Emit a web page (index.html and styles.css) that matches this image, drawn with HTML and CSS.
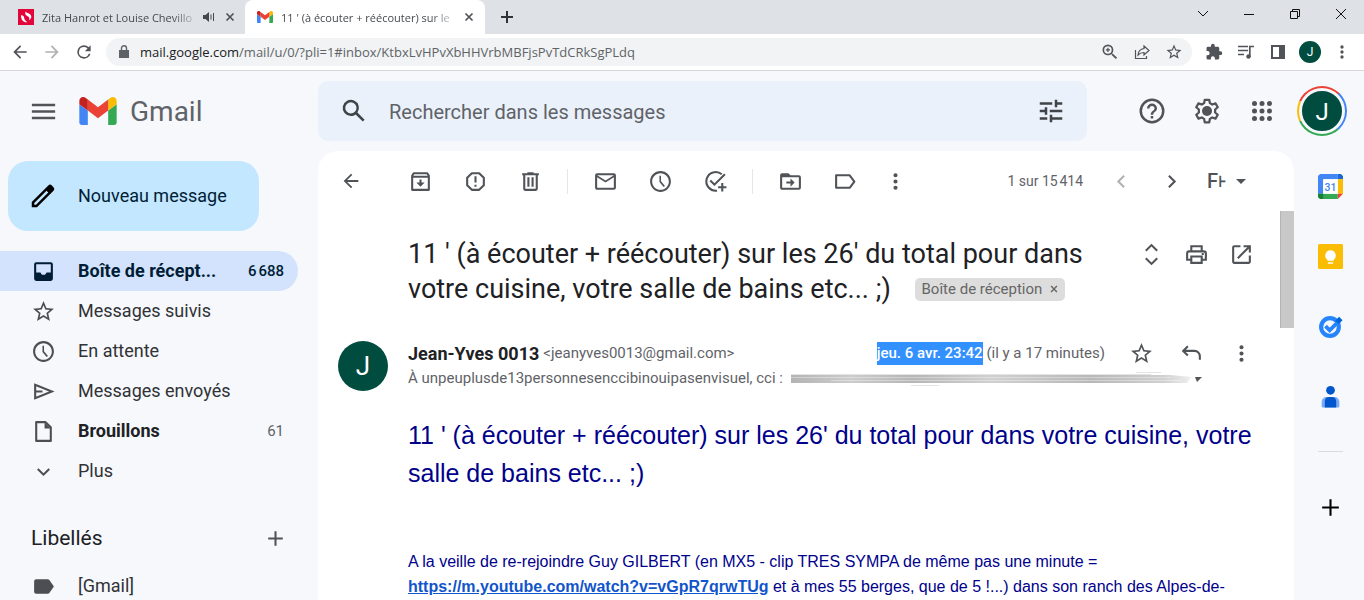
FILE: index.html
```html
<!DOCTYPE html>
<html lang="fr">
<head>
<meta charset="utf-8">
<title>Gmail</title>
<link rel="stylesheet" href="styles.css">
</head>
<body>
<svg class="sprite" aria-hidden="true">
  <symbol id="close" viewBox="0 0 24 24"><path d="M5 5l14 14M19 5L5 19" fill="none" stroke="currentColor" stroke-width="3.4"/></symbol>
  <symbol id="dots" viewBox="0 0 24 24"><path d="M12 8a2 2 0 1 0 0-4 2 2 0 0 0 0 4zm0 2a2 2 0 1 0 0 4 2 2 0 0 0 0-4zm0 6a2 2 0 1 0 0 4 2 2 0 0 0 0-4z"/></symbol>
  <symbol id="star" viewBox="0 0 24 24"><path d="M22 9.24l-7.19-.62L12 2 9.19 8.63 2 9.24l5.46 4.73L5.82 21 12 17.27 18.18 21l-1.63-7.03L22 9.24zM12 15.4l-3.76 2.27 1-4.28-3.32-2.88 4.38-.38L12 6.1l1.71 4.04 4.38.38-3.32 2.88 1 4.28L12 15.4z"/></symbol>
  <symbol id="clock" viewBox="0 0 24 24"><path d="M11.99 2C6.47 2 2 6.48 2 12s4.47 10 9.99 10C17.52 22 22 17.52 22 12S17.52 2 11.99 2zM12 20c-4.42 0-8-3.58-8-8s3.58-8 8-8 8 3.58 8 8-3.580 8-8 8zM12.500 6.500H11v6l4 4.800 1.300-1-3.800-4.500z"/></symbol>
  <symbol id="back" viewBox="0 0 24 24"><path d="M20 11H7.830l5.590-5.590L12 4l-8 8 8 8 1.410-1.410L7.830 13H20z"/></symbol>
  <symbol id="gmail" viewBox="52 42 88 66"><path fill="#4285f4" d="M58 108h14V74L52 59v43c0 3.320 2.690 6 6 6"/><path fill="#34a853" d="M120 108h14c3.320 0 6-2.690 6-6V59l-20 15"/><path fill="#fbbc04" d="M120 48v26l20-15v-8c0-7.420-8.470-11.650-14.400-7.200"/><path fill="#ea4335" d="M72 74V48l24 18 24-18v26L96 92"/><path fill="#c5221f" d="M52 51v8l20 15V48l-5.600-4.200c-5.940-4.450-14.400-.22-14.400 7.200"/></symbol>
</svg>

<div class="tabs">
  <div class="tab">
    <svg class="favicon" viewBox="0 0 16 16"><path fill="#e2053a" d="M0 0h16v16H0z"/><path fill="#fff" d="M7.500 2.500C6.800 5 7.500 6.300 9.200 7c2 .8 2.600 1.800 1.800 4.200 2.800-1.400 3-4.700.8-6.200-1.300-.9-3-1-4.300-2.500zM3 6.500c1.500-.5 3 .5 3.200 2.500.2 1.700 1.300 2.800 3.300 4.200-3.500.6-6.700-2-6.500-6.700z"/></svg>
    <span class="tab-title">Zita Hanrot et Louise Chevillo</span>
    <svg class="speaker" viewBox="0 0 14 12"><path d="M1 4h2.500L7 1v10L3.500 8H1z"/><path d="M9 3.500v5M11.500 2v8" stroke="currentColor" fill="none"/></svg>
    <button class="tab-close" aria-label="Fermer"><svg viewBox="0 0 24 24"><use href="#close"/></svg></button>
  </div>
  <div class="tab active">
    <svg class="favicon"><use href="#gmail"/></svg>
    <span class="tab-title">11 ' (à écouter + réécouter) sur le</span>
    <button class="tab-close" aria-label="Fermer"><svg viewBox="0 0 24 24"><use href="#close"/></svg></button>
  </div>
  <button class="new-tab" aria-label="Nouvel onglet"><svg viewBox="0 0 12 12"><path d="M6 0v12M0 6h12" stroke="currentColor" stroke-width="2"/></svg></button>
  <div class="window-controls">
    <button aria-label="Onglets"><svg viewBox="0 0 12 12"><path d="M1 3l5 5 5-5"/></svg></button>
    <button aria-label="Réduire"><svg viewBox="0 0 12 12"><path d="M1 6.500h10"/></svg></button>
    <button aria-label="Restaurer"><svg viewBox="0 0 12 12"><path d="M1.500 3.500h7v7h-7zM3.500 3.500v-2h7v7h-2"/></svg></button>
    <button aria-label="Fermer la fenêtre"><svg viewBox="0 0 12 12"><path d="M1 1l10 10M11 1L1 11"/></svg></button>
  </div>
</div>

<div class="browser-bar">
  <button aria-label="Retour"><svg class="i20"><use href="#back"/></svg></button>
  <button class="faded" aria-label="Avancer"><svg class="i20" viewBox="0 0 24 24"><path d="M4 11h12.170l-5.590-5.590L12 4l8 8-8 8-1.410-1.410L16.170 13H4z"/></svg></button>
  <button aria-label="Actualiser"><svg class="i20" viewBox="0 0 24 24"><path d="M17.650 6.350A7.960 7.960 0 0 0 12 4a8 8 0 1 0 7.730 10h-2.080A6 6 0 1 1 12 6c1.660 0 3.140.69 4.220 1.780L13 11h7V4z"/></svg></button>
  <div class="omnibox">
    <svg class="lock" viewBox="0 0 10 14"><path d="M0 5h10v8H0z"/><path d="M2.500 5.500V3.300a2.500 2.500 0 0 1 5 0v2.200" fill="none" stroke="currentColor" stroke-width="1.400"/></svg>
    <span class="url"><b>mail.google.com</b>/mail/u/0/?pli=1#inbox/KtbxLvHPvXbHHVrbMBFjsPvTdCRkSgPLdq</span>
    <button aria-label="Zoom"><svg class="i20" viewBox="0 0 24 24"><path d="M15.500 14h-.79l-.28-.27A6.470 6.470 0 0 0 16 9.500 6.500 6.500 0 1 0 9.500 16c1.610 0 3.090-.59 4.230-1.570l.27.28v.79l5 4.990L20.490 19zm-6 0a4.500 4.500 0 1 1 0-9 4.500 4.500 0 0 1 0 9zm.75-7h-1.500v1.750H7v1.500h1.750V12h1.500v-1.750H12v-1.500h-1.750z"/></svg></button>
    <button aria-label="Partager"><svg class="i18" viewBox="0 0 18 18"><path d="M2.500 7v8.500h11V13M11 3l5 4.500-5 4.500V9.500c-3 0-4.500.8-6 2.500.3-3.500 2.500-6 6-6.500z" fill="none" stroke="currentColor" stroke-width="1.200"/></svg></button>
    <button aria-label="Favori"><svg class="i18"><use href="#star"/></svg></button>
  </div>
  <button aria-label="Extensions"><svg class="i18" viewBox="0 0 24 24"><path d="M20.500 11H19V7c0-1.100-.9-2-2-2h-4V3.500a2.500 2.500 0 0 0-5 0V5H4c-1.100 0-2 .9-2 2v3.800h1.500a2.700 2.700 0 0 1 0 5.400H2V20c0 1.100.9 2 2 2h3.800v-1.500a2.700 2.700 0 0 1 5.400 0V22H17c1.100 0 2-.9 2-2v-4h1.500a2.500 2.500 0 0 0 0-5z"/></svg></button>
  <button aria-label="Médias"><svg class="i18" viewBox="0 0 18 18"><path d="M1 3.500h10M1 7.500h10M1 11.500h6M12.800 14V3.500H17" fill="none" stroke="currentColor" stroke-width="1.700"/><circle cx="11.500" cy="13.500" r="2.200"/></svg></button>
  <button aria-label="Panneau latéral"><svg class="i18" viewBox="0 0 18 18"><path d="M2 2h14v14H2zm2 2v10h6V4z" fill-rule="evenodd"/></svg></button>
  <button aria-label="Profil"><span class="profile">J</span></button>
  <button aria-label="Menu"><svg class="i20"><use href="#dots"/></svg></button>
</div>

<div class="app">
  <header class="header">
    <div class="brand">
      <button aria-label="Menu principal"><svg class="i31" viewBox="0 0 24 24"><path d="M3 18h18v-2H3zm0-5h18v-2H3zm0-7v2h18V6z"/></svg></button>
      <svg class="logo"><use href="#gmail"/></svg>
      <span class="brand-name">Gmail</span>
    </div>
    <form class="search">
      <button type="button" aria-label="Rechercher"><svg class="i30" viewBox="0 0 24 24"><path d="M20.490 19l-5.730-5.730A6.500 6.500 0 1 0 9.500 16c1.500 0 2.700-.4 3.800-1.300L19 20.490zM5 9.500a4.500 4.500 0 1 1 9 0 4.500 4.500 0 0 1-9 0z"/></svg></button>
      <input type="text" aria-label="Rechercher dans les messages" placeholder="Rechercher dans les messages">
      <button type="button" aria-label="Options de recherche"><svg class="i30" viewBox="0 0 24 24"><path d="M3 17v2h6v-2zM3 5v2h10V5zm10 16v-2h8v-2h-8v-2h-2v6zM7 9v2H3v2h4v2h2V9zm14 4v-2H11v2zm-6-4h2V7h4V5h-4V3h-2z"/></svg></button>
    </form>
    <div class="header-actions">
      <button aria-label="Aide"><svg class="i30" viewBox="0 0 24 24"><path d="M11 18h2v-2h-2zm1-16a10 10 0 1 0 0 20 10 10 0 0 0 0-20zm0 18a8 8 0 1 1 0-16 8 8 0 0 1 0 16zm0-14a4 4 0 0 0-4 4h2a2 2 0 1 1 4 0c0 2-3 1.750-3 5h2c0-2.250 3-2.500 3-5a4 4 0 0 0-4-4z"/></svg></button>
      <button aria-label="Paramètres"><svg class="i30" viewBox="0 0 24 24"><path d="M10.200 3h3.600l.5 2.700 1.900 1.100 2.600-.9 1.800 3.100-2.100 1.800v2.400l2.100 1.800-1.800 3.100-2.600-.9-1.900 1.100-.5 2.700h-3.600l-.5-2.700-1.900-1.100-2.600.9L3.400 15l2.100-1.800v-2.400L3.400 9l1.800-3.100 2.600.9 1.900-1.100z" fill="none" stroke="currentColor" stroke-width="1.800" stroke-linejoin="round"/><circle cx="12" cy="12" r="4"/></svg></button>
      <button aria-label="Applications Google"><svg class="i30" viewBox="0 0 24 24"><circle cx="6" cy="6" r="2"/><circle cx="12" cy="6" r="2"/><circle cx="18" cy="6" r="2"/><circle cx="6" cy="12" r="2"/><circle cx="12" cy="12" r="2"/><circle cx="18" cy="12" r="2"/><circle cx="6" cy="18" r="2"/><circle cx="12" cy="18" r="2"/><circle cx="18" cy="18" r="2"/></svg></button>
      <button class="account" aria-label="Compte"><span>J</span></button>
    </div>
  </header>

  <nav class="sidebar">
    <button class="compose"><svg class="i30" viewBox="0 0 24 24"><path d="M20.410 4.940l-1.350-1.350a2 2 0 0 0-2.830 0L3 16.820V21h4.180L20.410 7.770a2 2 0 0 0 0-2.830zm-14 14.120L5 19v-1.360l9.820-9.820 1.410 1.410z"/></svg><span>Nouveau message</span></button>
    <a class="nav-item selected" href="#"><svg class="i25" viewBox="0 0 24 24"><path fill-rule="evenodd" d="M5 3h14a2 2 0 0 1 2 2v14a2 2 0 0 1-2 2H5a2 2 0 0 1-2-2V5a2 2 0 0 1 2-2zm0 2v8h4l1.500 2h3l1.500-2h4V5z"/></svg><span>Boîte de récept...</span><em>6&#8239;688</em></a>
    <a class="nav-item" href="#"><svg class="i25"><use href="#star"/></svg><span>Messages suivis</span></a>
    <a class="nav-item" href="#"><svg class="i25"><use href="#clock"/></svg><span>En attente</span></a>
    <a class="nav-item" href="#"><svg class="i25" viewBox="0 0 24 24"><path d="M4 5.500v13L20 12zM4.500 12H11" fill="none" stroke="currentColor" stroke-width="2"/></svg><span>Messages envoyés</span></a>
    <a class="nav-item strong" href="#"><svg class="i25" viewBox="0 0 24 24"><path d="M14 3H5v18h14V8z" fill="none" stroke="currentColor" stroke-width="2" stroke-linejoin="round"/><path d="M13 3v6h6z"/></svg><span>Brouillons</span><em>61</em></a>
    <a class="nav-item" href="#"><svg class="i25" viewBox="0 0 24 24"><path d="M6.500 9.500L12 15l5.500-5.500" fill="none" stroke="currentColor" stroke-width="2"/></svg><span>Plus</span></a>
    <div class="labels"><h2>Libellés</h2><button aria-label="Créer un libellé"><svg class="i25" viewBox="0 0 24 24"><path d="M12 5v14M5 12h14" stroke="currentColor" stroke-width="2"/></svg></button></div>
    <a class="nav-item" href="#"><svg class="i25" viewBox="0 0 24 24"><path d="M3 7a2 2 0 0 1 2-2h11c.7 0 1.300.3 1.600.8L22 12l-4.400 6.200c-.3.500-.9.8-1.600.8H5a2 2 0 0 1-2-2z"/></svg><span>[Gmail]</span></a>
  </nav>

  <main class="panel">
    <div class="toolbar">
      <button class="return" aria-label="Retour à la boîte de réception"><svg class="i22"><use href="#back"/></svg></button>
      <button aria-label="Archiver"><svg class="i25" viewBox="0 0 24 24"><path d="M4 6.500L5.500 4h13L20 6.500V20H4zM4 7.500h16" fill="none" stroke="currentColor" stroke-width="2" stroke-linejoin="round"/><path d="M11 10h2v3h3l-4 4-4-4h3z"/></svg></button>
      <button aria-label="Signaler comme spam"><svg class="i25" viewBox="0 0 24 24"><path d="M8.500 4h7L20 8.500v7L15.500 20h-7L4 15.500v-7z" fill="none" stroke="currentColor" stroke-width="2" stroke-linejoin="round"/><path d="M11 7h2v6h-2zm0 8h2v2h-2z"/></svg></button>
      <button aria-label="Supprimer"><svg class="i25" viewBox="0 0 24 24"><path d="M15 4V3H9v1H4v2h1v13c0 1.100.9 2 2 2h10a2 2 0 0 0 2-2V6h1V4zm2 15H7V6h10zM9 8h2v9H9zm4 0h2v9h-2z"/></svg></button>
      <i class="divider"></i>
      <button aria-label="Marquer comme non lu"><svg class="i25" viewBox="0 0 24 24"><path d="M22 6c0-1.100-.9-2-2-2H4a2 2 0 0 0-2 2v12c0 1.100.9 2 2 2h16a2 2 0 0 0 2-2zm-2 0l-8 5-8-5zm0 12H4V8l8 5 8-5z"/></svg></button>
      <button aria-label="Mettre en attente"><svg class="i25"><use href="#clock"/></svg></button>
      <button aria-label="Ajouter à Tasks"><svg class="i25" viewBox="0 0 24 24"><path d="M18 5A9 9 0 1 0 13.500 20.800" fill="none" stroke="currentColor" stroke-width="2"/><path d="M7 11l4 4L21 5M18.500 13.500v8M14.500 17.500h8" fill="none" stroke="currentColor" stroke-width="2"/></svg></button>
      <i class="divider"></i>
      <button aria-label="Déplacer vers"><svg class="i25" viewBox="0 0 24 24"><path d="M20 6h-8l-2-2H4a2 2 0 0 0-2 2v12c0 1.100.9 2 2 2h16a2 2 0 0 0 2-2V8a2 2 0 0 0-2-2zm0 12H4V8h16zm-8-1l4-4-4-4v3H8v2h4z"/></svg></button>
      <button aria-label="Libellés"><svg class="i25" viewBox="0 0 24 24"><path d="M3 6h13l4.500 6-4.500 6H3z" fill="none" stroke="currentColor" stroke-width="2" stroke-linejoin="round"/></svg></button>
      <button class="narrow" aria-label="Plus"><svg class="i25"><use href="#dots"/></svg></button>
      <span class="counter">1 sur 15&#8239;414</span>
      <button class="page faded" aria-label="Plus récent"><svg class="i25" viewBox="0 0 24 24"><path d="M14.500 6.500L9 12l5.500 5.500" fill="none" stroke="currentColor" stroke-width="2"/></svg></button>
      <button class="page" aria-label="Plus ancien"><svg class="i25" viewBox="0 0 24 24"><path d="M9.500 6.500L15 12l-5.500 5.500" fill="none" stroke="currentColor" stroke-width="2"/></svg></button>
      <button class="input-tool" aria-label="Outils de saisie">F<small>⊦</small><svg viewBox="0 0 10 5"><path d="M0 0h10L5 5z"/></svg></button>
    </div>

    <div class="scroll">
      <article class="message">
        <div class="subject-row">
          <h1>11 ' (à écouter + réécouter) sur les 26' du total pour dans votre cuisine, votre salle de bains etc... ;) <span class="chip">Boîte de réception <button aria-label="Supprimer le libellé"><svg viewBox="0 0 24 24"><use href="#close"/></svg></button></span></h1>
          <div class="subject-actions">
            <button aria-label="Tout développer"><svg class="i25" viewBox="0 0 24 24"><path d="M6.500 8.500L12 3l5.500 5.500M6.500 15.500L12 21l5.500-5.500" fill="none" stroke="currentColor" stroke-width="2"/></svg></button>
            <button aria-label="Imprimer"><svg class="i25" viewBox="0 0 24 24"><path d="M7 8V4h10v4M7 17H3v-6a2 2 0 0 1 2-2h14a2 2 0 0 1 2 2v6h-4M7 14h10v6H7z" fill="none" stroke="currentColor" stroke-width="2"/><path d="M17 10.500h2v2h-2z"/></svg></button>
            <button aria-label="Nouvelle fenêtre"><svg class="i25" viewBox="0 0 24 24"><path d="M19 19H5V5h6V3H5a2 2 0 0 0-2 2v14c0 1.100.9 2 2 2h14a2 2 0 0 0 2-2v-6h-2zM14 3v2h3.590l-9.830 9.830 1.410 1.410L19 6.410V10h2V3z"/></svg></button>
          </div>
        </div>

        <div class="sender-row">
          <span class="avatar">J</span>
          <div class="sender">
            <div class="from"><strong>Jean-Yves 0013</strong><span>&lt;jeanyves0013@gmail.com&gt;</span><time><mark>jeu. 6 avr. 23:42</mark> (il y a 17 minutes)</time></div>
            <div class="to"><span>À unpeuplusde13personnesenccibinouipasenvisuel, cci :</span>
              <svg class="smudge" viewBox="0 0 412 16" preserveAspectRatio="none"><defs><linearGradient id="grey"><stop offset="0" stop-color="#b4b4b4"/><stop offset=".15" stop-color="#ccc"/><stop offset=".3" stop-color="#b6b6b6"/><stop offset=".5" stop-color="#d0d0d0"/><stop offset=".75" stop-color="#b8b8b8"/><stop offset=".93" stop-color="#d0d0d0"/><stop offset="1" stop-color="#eee"/></linearGradient></defs><path d="M0 4h380l20 2-4 6H0z" fill="url(#grey)"/><path d="M0 3.500h360" stroke="#e4e4e4"/><path d="M0 6.500h380M40 9.500h350" stroke="#fff" stroke-opacity=".35"/><path d="M120 14.500h28M345 1.500h25" stroke="#e4e4e4"/><path d="M404 6h7l-5 5z" fill="#555"/></svg>
            </div>
          </div>
          <div class="sender-actions">
            <button aria-label="Suivre"><svg class="i25"><use href="#star"/></svg></button>
            <button aria-label="Répondre"><svg class="i25" viewBox="0 0 24 24"><path d="M8.500 5L4 9.500 8.500 14M4 9.500h11a5 5 0 0 1 5 5V18" fill="none" stroke="currentColor" stroke-width="2"/></svg></button>
            <button aria-label="Plus d'actions"><svg class="i25"><use href="#dots"/></svg></button>
          </div>
        </div>

        <div class="body">
          <p class="lead">11 ' (à écouter + réécouter) sur les 26' du total pour dans votre cuisine, votre salle de bains etc... ;)</p>
          <p>A la veille de re-rejoindre Guy GILBERT (en MX5 - clip TRES SYMPA de même pas une minute =<br><a href="#">https://m.youtube.com/watch?v=vGpR7qrwTUg</a> et à mes 55 berges, que de 5 !...) dans son ranch des Alpes-de-</p>
        </div>
      </article>
      <div class="scrollbar"></div>
    </div>
  </main>

  <aside class="rail">
    <button aria-label="Agenda"><svg class="i25" viewBox="0 0 24 24"><path fill="#4285f4" d="M2 0h17v5H5v14H0V2z"/><path fill="#1967d2" d="M19 0h3l2 2v3h-5z"/><path fill="#fbbc04" d="M19 5h5v14h-5z"/><path fill="#34a853" d="M0 19h19v5H2l-2-2z"/><path fill="#188038" d="M0 19h5v5H2l-2-2z"/><path fill="#ea4335" d="M19 19h5l-5 5z"/><path fill="#fff" d="M5 5h14v14H5z"/><text x="12" y="16" text-anchor="middle">31</text></svg></button>
    <button aria-label="Keep"><svg class="i25" viewBox="0 0 24 24"><rect width="24" height="24" rx="1.500" fill="#fbbc04"/><path fill="#fff" d="M12 6a5.200 5.200 0 0 0-2.800 9.500V16h5.600v-.5A5.200 5.200 0 0 0 12 6zM9.500 17.500h5V19h-5z"/></svg></button>
    <button aria-label="Tasks"><svg class="i25" viewBox="0 0 24 24"><circle cx="11.500" cy="12.500" r="8.500" fill="none" stroke="#2684fc" stroke-width="4"/><path d="M7.200 11.700l4 4L21 5.900" fill="none" stroke="#2684fc" stroke-width="3.600"/><path fill="#0066da" d="M16.500 6.500l3.800-3.800 3.200 3.200-3.600 3.600z"/></svg></button>
    <button aria-label="Contacts"><svg class="i25" viewBox="0 0 24 24"><circle cx="12" cy="6" r="4.200" fill="#0057cc"/><path fill="#7baaf7" d="M3.500 17a4.500 4.500 0 0 1 4.500-4.500h8a4.500 4.500 0 0 1 4.500 4.500v4.500a1 1 0 0 1-1 1h-15a1 1 0 0 1-1-1z"/><path fill="#0057cc" d="M6.500 17c0-3 1.500-4.500 4-4.500h3c2.500 0 4 1.500 4 4.500v5.500h-11z"/></svg></button>
    <hr>
    <button class="black" aria-label="Télécharger des modules"><svg class="i25" viewBox="0 0 24 24"><path d="M12 4v16M4 12h16" stroke="currentColor" stroke-width="2"/></svg></button>
  </aside>
</div>
</body>
</html>
```
FILE: styles.css
```css
* { box-sizing: border-box; }
body {
  margin: 0;
  height: 100vh;
  overflow: hidden;
  display: flex;
  flex-direction: column;
  background: #f6f8fc;
  color: #202124;
  font-family: Roboto, "Liberation Sans", sans-serif;
  font-size: 18px;
}
.sprite { display: none; }
svg { display: block; flex: none; fill: currentColor; }
button {
  margin: 0;
  padding: 0;
  border: 0;
  background: none;
  color: #505357;
  font: inherit;
  display: flex;
  align-items: center;
  justify-content: center;
  flex: none;
}
.i18 { width: 18px; height: 18px; }
.i20 { width: 20px; height: 20px; }
.i22 { width: 22px; height: 22px; }
.i25 { width: 25px; height: 25px; }
.i30 { width: 30px; height: 30px; }
.i31 { width: 31px; height: 31px; }
.faded { opacity: .45; }

/* Browser tabs */
.tabs {
  display: flex;
  flex: none;
  height: 34px;
  background: #dee1e6;
  font: 11px "Open Sans", sans-serif;
}
.tab {
  display: flex;
  align-items: center;
  width: 244px;
  padding: 0 4px 0 18px;
  color: #45494d;
}
.tab.active {
  width: 240px;
  padding: 0 6px 0 12px;
  margin-left: 1px;
  background: #fff;
  border-radius: 8px 8px 0 0;
}
.favicon { width: 16px; height: 16px; margin-right: 8px; }
.tab-title {
  flex: 1;
  overflow: hidden;
  white-space: nowrap;
  -webkit-mask-image: linear-gradient(to left, transparent, #000 28px);
  mask-image: linear-gradient(to left, transparent, #000 28px);
}
.speaker { width: 14px; height: 12px; margin: 0 4px 0 2px; }
.tab-close { width: 20px; height: 20px; }
.tab-close svg { width: 12px; height: 12px; }
.new-tab { width: 44px; color: #303336; }
.new-tab svg { width: 12px; height: 12px; }
.window-controls { display: flex; margin-left: auto; }
.window-controls button { width: 46px; height: 28px; color: #111; }
.window-controls svg { width: 12px; height: 12px; fill: none; stroke: currentColor; }

/* Address bar */
.browser-bar {
  display: flex;
  align-items: center;
  flex: none;
  height: 37px;
  padding: 0 6px 0 4px;
  background: #fff;
  border-bottom: 1px solid #d5d7da;
}
.browser-bar button { width: 32px; height: 28px; }
.omnibox {
  display: flex;
  align-items: center;
  flex: 1;
  min-width: 0;
  height: 28px;
  margin: 0 6px;
  padding: 0 2px 0 13px;
  border-radius: 14px;
  background: #f1f3f4;
  color: #5f6368;
}
.lock { width: 10px; height: 14px; margin-right: 11px; }
.url {
  flex: 1;
  overflow: hidden;
  white-space: nowrap;
  font: 13px "Open Sans", sans-serif;
}
.url b { color: #202124; font-weight: 400; }
.profile {
  width: 22px;
  height: 22px;
  border-radius: 50%;
  background: #004d40;
  color: #fff;
  font-size: 12px;
  line-height: 22px;
}

/* Gmail shell */
.app {
  flex: 1;
  min-height: 0;
  display: grid;
  grid-template-columns: 318px minmax(0, 1fr) 70px;
  grid-template-rows: 80px minmax(0, 1fr);
}
.header { grid-column: 1 / -1; display: flex; align-items: center; }
.brand { display: flex; align-items: center; width: 318px; padding-left: 28px; }
.logo { width: 38px; height: 28px; margin: 0 13px 0 20px; }
.brand-name { color: #5f6368; font-size: 28px; }
.search {
  display: flex;
  align-items: center;
  flex: 1;
  min-width: 0;
  height: 60px;
  padding: 0 21px;
  border-radius: 10px;
  background: #eaf1fb;
}
.search button { color: #404347; }
.search input {
  flex: 1;
  min-width: 0;
  margin: 0 20px;
  padding: 2px 0 0;
  border: 0;
  background: none;
  font: inherit;
  font-size: 20px;
  outline: none;
}
.search input::placeholder { color: #5f6368; opacity: 1; }
.header-actions { display: flex; align-items: center; width: 277px; padding: 0 17px 0 37px; }
.header-actions button { width: 55px; }
.header-actions .account {
  width: 50px;
  height: 50px;
  margin-left: 8px;
  border-radius: 50%;
  background: conic-gradient(from 45deg, #4285f4 0 95deg, #34a853 95deg 200deg, #fbbc04 200deg 250deg, #ea4335 250deg);
}
.account span {
  width: 46px;
  height: 46px;
  border: 3px solid #f6f8fc;
  border-radius: 50%;
  background: #004d40;
  color: #fff;
  font-size: 24px;
  line-height: 42px;
}

/* Folder list */
.sidebar { overflow: hidden; padding-top: 10px; }
.compose {
  justify-content: flex-start;
  gap: 20px;
  width: 251px;
  height: 70px;
  margin: 0 0 20px 8px;
  padding-left: 20px;
  border-radius: 20px;
  background: #c2e7ff;
  color: #001d35;
}
.compose svg { color: #000; }
.compose span, .nav-item span { padding-bottom: 2px; }
.nav-item {
  display: flex;
  align-items: center;
  gap: 22px;
  height: 40px;
  width: 298px;
  padding: 0 14px 0 31px;
  color: #303235;
  text-decoration: none;
}
.nav-item svg { color: #4b4e52; }
.nav-item span { flex: 1; white-space: nowrap; }
.nav-item em { font-style: normal; font-size: 15px; color: #5f6368; }
.nav-item.strong span { font-weight: 700; color: #202124; }
.nav-item.selected {
  border-radius: 0 20px 20px 0;
  background: #d3e3fd;
  font-weight: 700;
}
.nav-item.selected em { font-weight: 500; }
.nav-item.selected * { color: #001d35; }
.labels {
  display: flex;
  align-items: center;
  justify-content: space-between;
  width: 298px;
  height: 40px;
  margin: 27px 0 8px;
  padding: 0 10px 0 31px;
}
.labels h2 { margin: 0; font-size: 21px; font-weight: 400; }

/* Reading pane */
.panel {
  display: flex;
  flex-direction: column;
  min-width: 0;
  overflow: hidden;
  border-radius: 20px 20px 0 0;
  background: #fff;
}
.toolbar { display: flex; align-items: center; flex: none; height: 60px; padding: 0 48px 0 5px; }
.toolbar button { width: 55px; }
.toolbar .return { margin-right: 15px; }
.toolbar .narrow { width: 45px; }
.toolbar .page { width: 50px; }
.divider { width: 1px; height: 25px; margin: 0 10px 0 9px; background: #e4e6e9; }
.counter { margin: 0 13px 0 auto; font-size: 14px; color: #5f6368; }
.toolbar .input-tool { width: 39px; margin-left: 11px; font-size: 20px; font-weight: 500; }
.input-tool small { font: bold 16px "DejaVu Sans", sans-serif; }
.input-tool svg { width: 10px; height: 5px; margin-left: auto; }
.scroll { display: flex; flex: 1; min-height: 0; align-items: flex-start; }
.scrollbar { width: 14px; height: 117px; background: #c8c8c8; border-left: 1px solid #b4b4b4; flex: none; }
.message { flex: 1; min-width: 0; padding: 26px 16px 0 20px; }
.subject-row { display: flex; align-items: flex-start; padding-left: 70px; }
.subject-row h1 {
  flex: 1;
  margin: 0 24px 0 0;
  font-size: 27px;
  line-height: 35px;
  font-weight: 400;
}
.subject-actions { display: flex; height: 35px; }
.subject-actions button { width: 45px; }
.chip {
  display: inline-flex;
  align-items: center;
  gap: 7px;
  height: 23px;
  margin-left: 18px;
  padding: 0 6px;
  border-radius: 5px;
  background: #ddd;
  color: #666;
  font-size: 15px;
  line-height: 20px;
  vertical-align: 4px;
}
.chip button { width: 10px; color: #666; }
.chip button svg { width: 10px; height: 10px; }
.sender-row { display: flex; align-items: flex-start; margin-top: 34px; }
.avatar {
  width: 50px;
  height: 50px;
  margin-right: 20px;
  border-radius: 50%;
  background: #004d40;
  color: #fff;
  font-size: 26px;
  line-height: 50px;
  text-align: center;
}
.sender { flex: 1; min-width: 0; line-height: 25px; font-size: 15px; color: #5f6368; white-space: nowrap; }
.from { display: flex; align-items: center; gap: 4px; height: 25px; }
.from strong { font-size: 18px; color: #202124; }
.from time { margin-left: auto; }
.from mark { display: inline-block; height: 23px; line-height: 23px; background: #3390ff; color: #fff; font-weight: 500; }
.to { display: flex; align-items: center; gap: 8px; height: 25px; margin-right: -100px; }
.smudge { width: 412px; height: 16px; }
.sender-actions { display: flex; height: 25px; margin: 0 -2px 0 11px; }
.sender-actions button { width: 50px; }
.body {
  margin: 25px 0 0 70px;
  color: #00008b;
  font: 16px/25px "Liberation Sans", Arial, sans-serif;
}
.body p { margin: 0; }
.body .lead { margin-bottom: 57px; font-size: 25px; line-height: 38px; }
.body a { color: #15c; font-weight: 700; }

/* Side panel apps */
.rail { display: flex; flex-direction: column; align-items: center; padding-left: 2px; }
.rail button { width: 68px; height: 70px; }
.rail text { fill: #4285f4; font: 500 10px Roboto, sans-serif; }
.rail hr { width: 25px; height: 1px; margin: 20px 0; border: 0; background: #d9dbdf; flex: none; }
.rail .black { color: #000; }
```
